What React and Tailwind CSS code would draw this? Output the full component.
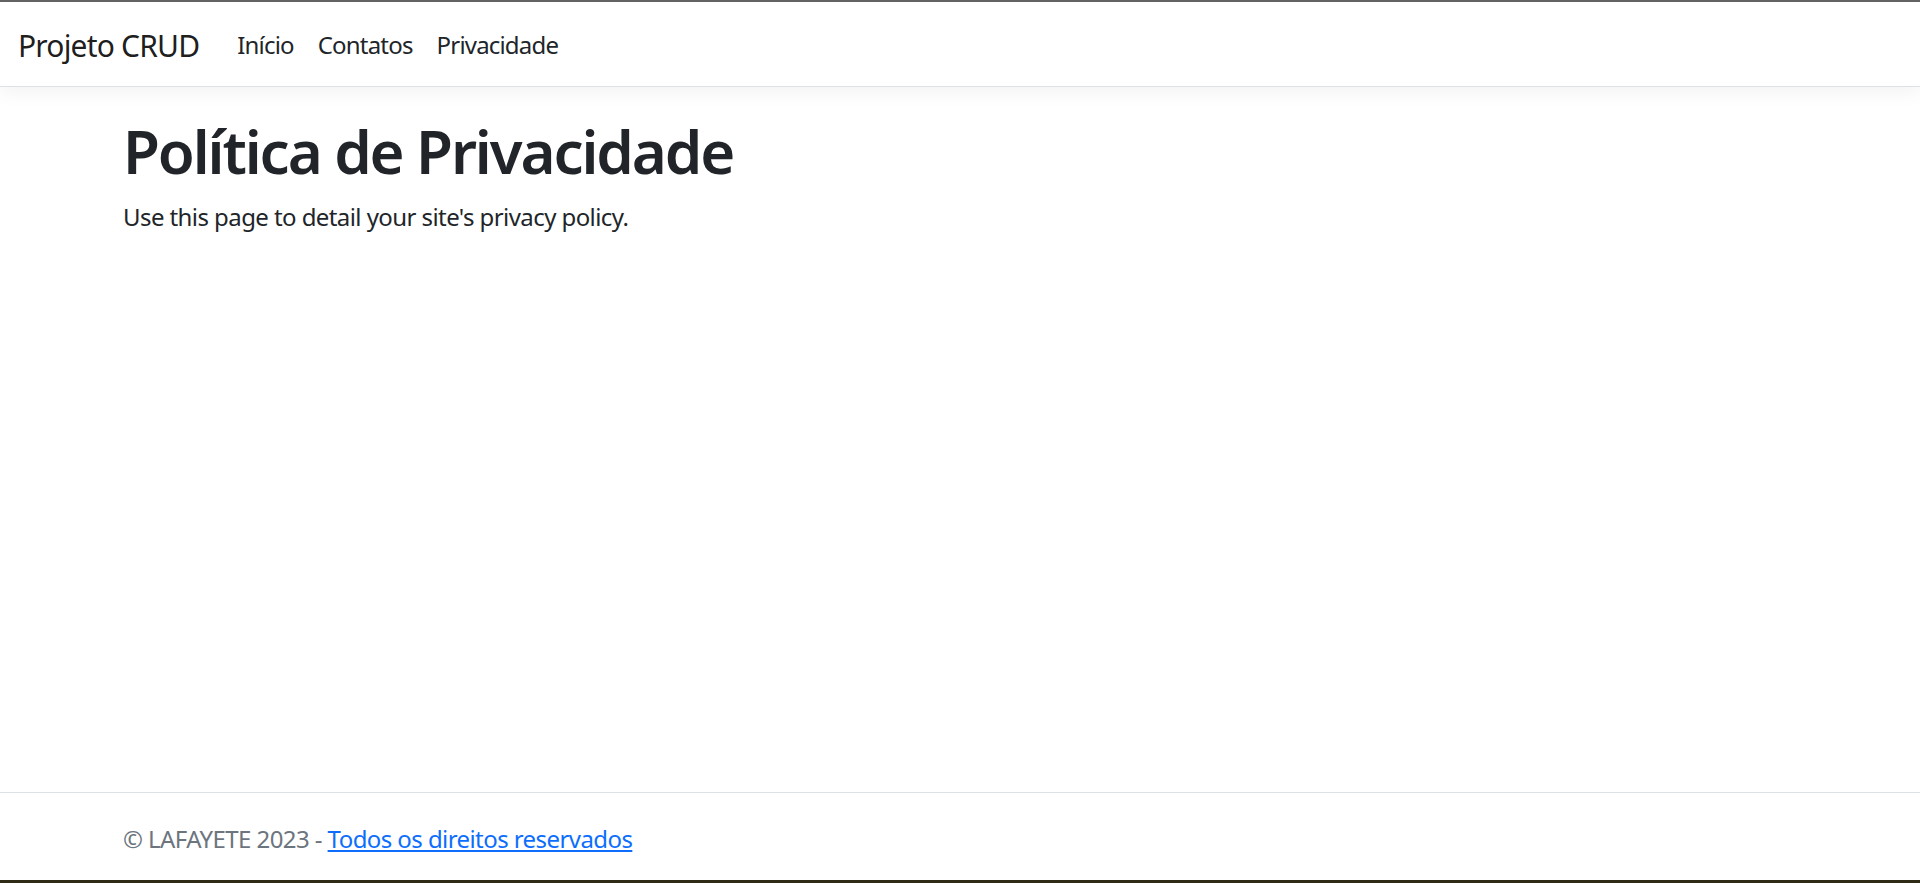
const FONT = { fontFamily: '"Noto Sans", "Open Sans", "Liberation Sans", sans-serif' };

const NAV_LINKS = ['Início', 'Contatos', 'Privacidade'];

function Navbar() {
  return (
    <header className="h-[85px] shrink-0 border-b border-[#dee2e6] bg-white shadow-[0_6px_18px_rgba(0,0,0,0.05)]">
      <nav className="flex h-full items-center px-[18px] pt-[2px]">
        <a href="#" className="mr-[26px] text-[30px] leading-[45px] tracking-[-0.027em] text-black/90">
          Projeto CRUD
        </a>
        <ul className="flex items-center">
          {NAV_LINKS.map((label) => (
            <li key={label}>
              <a
                href="#"
                className="block px-[12px] text-[24px] leading-[36px] tracking-[-0.034em] text-[#212529]"
              >
                {label}
              </a>
            </li>
          ))}
        </ul>
      </nav>
    </header>
  );
}

export default function App() {
  return (
    <div className="flex h-[883px] flex-col overflow-hidden bg-white text-[#212529]" style={FONT}>
      <div className="h-[2px] shrink-0 bg-[#646464]" />
      <Navbar />

      <main className="flex-1 pl-[123px] pt-[28px]">
        <h1 className="mb-[12px] text-[60px] font-semibold leading-[72px] tracking-[-0.035em] text-[#212529]">
          Política de Privacidade
        </h1>
        <p className="text-[24px] leading-[36px] tracking-[-0.024em]">
          Use this page to detail your site's privacy policy.
        </p>
      </main>

      <footer className="flex h-[88px] shrink-0 items-center border-t border-[#dee2e6] pl-[123px] pt-[4px] text-[24px] tracking-[-0.024em] text-[#6c757d]">
        <span>
          © LAFAYETE 2023 -{' '}
          <a href="#" className="text-[#0d6efd] underline">
            Todos os direitos reservados
          </a>
        </span>
      </footer>
      <div className="h-[3px] shrink-0 bg-[#2f2a16]" />
    </div>
  );
}
